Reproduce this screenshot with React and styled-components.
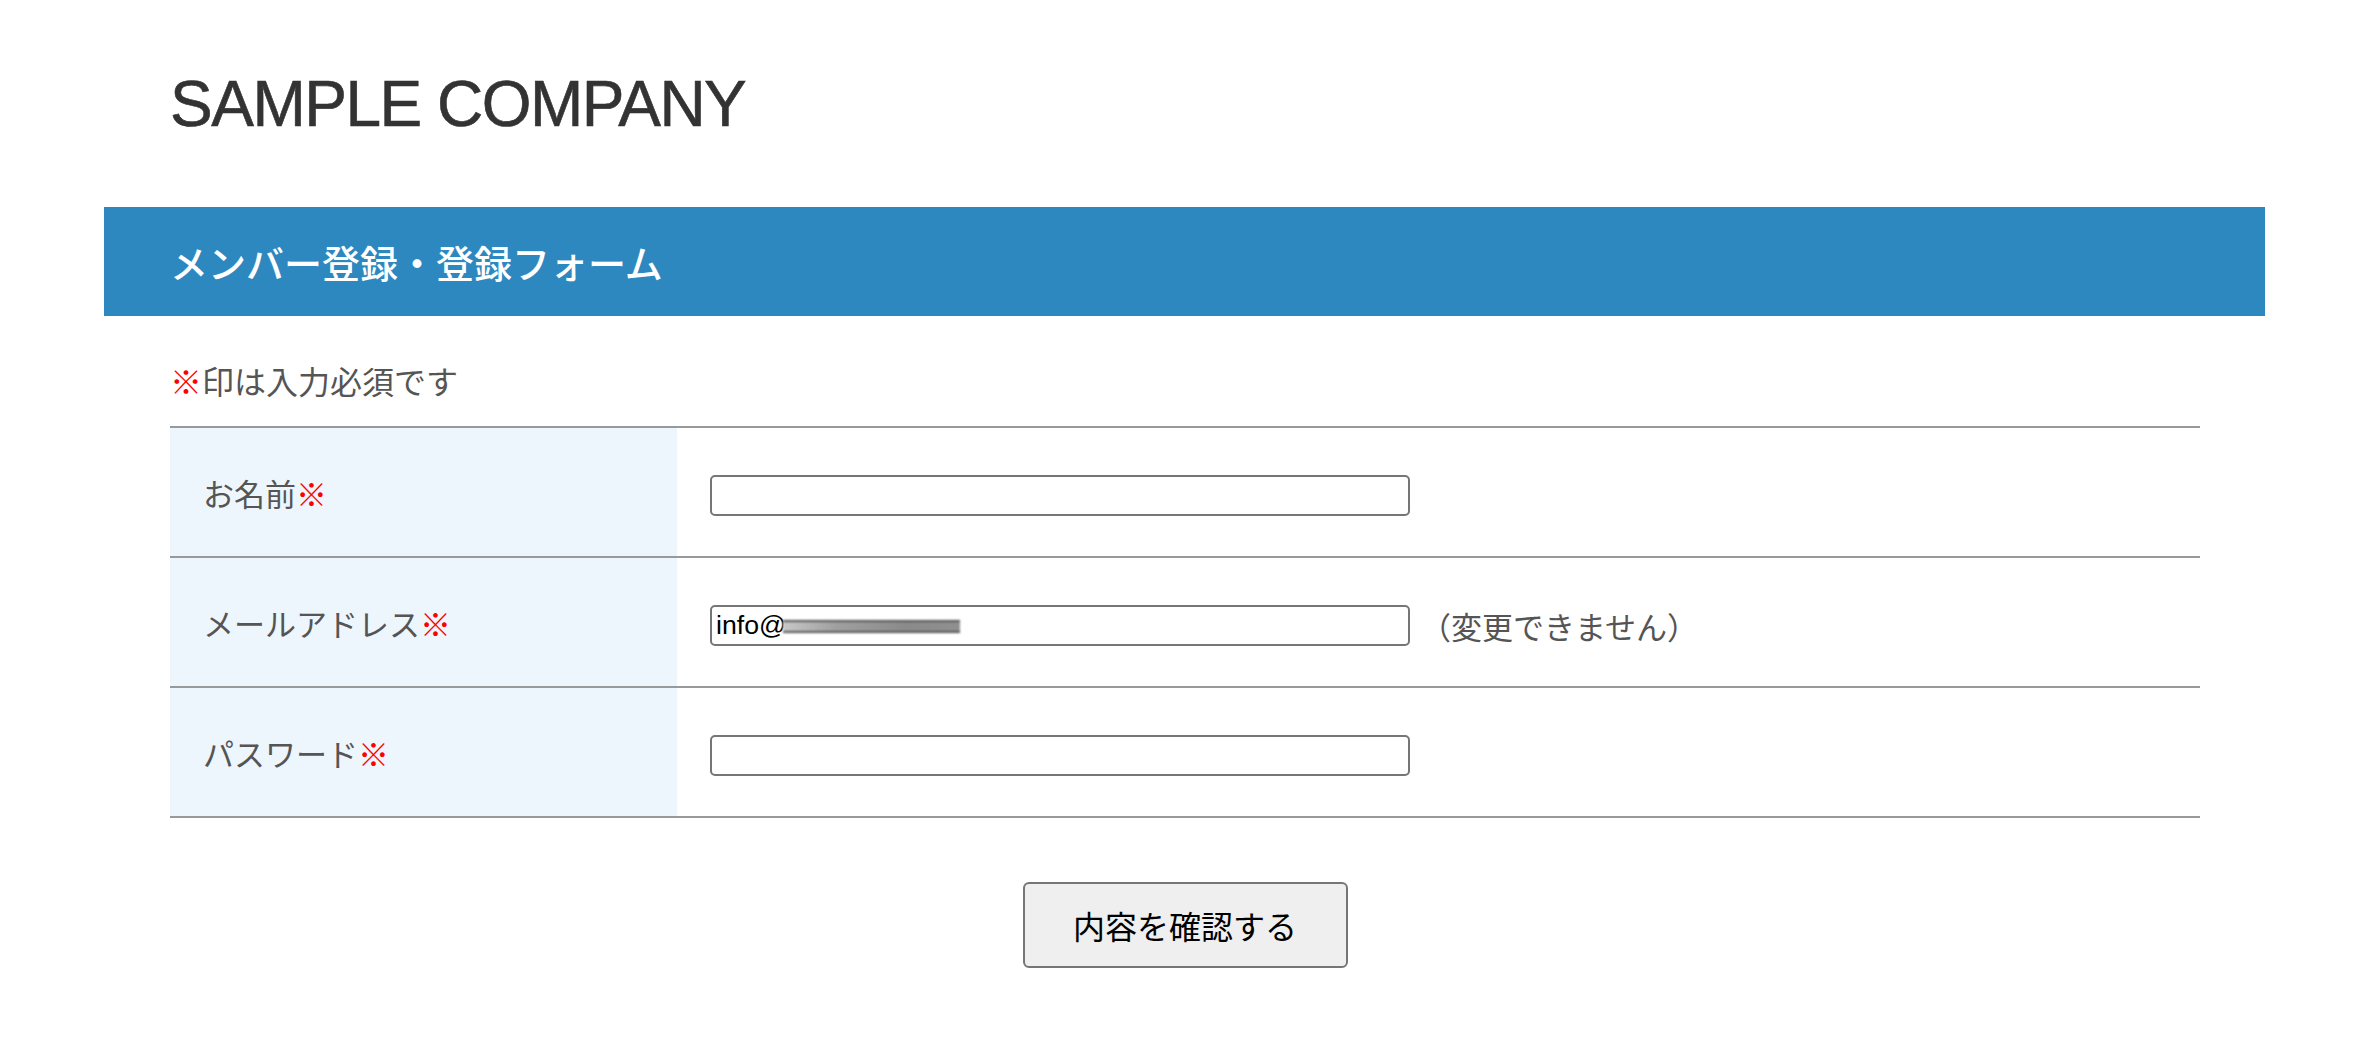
import styled, { createGlobalStyle } from "styled-components";

const GlobalStyle = createGlobalStyle`
  body {
    margin: 0;
    background: #fff;
    font-family: "Noto Sans CJK JP", "Liberation Sans", sans-serif;
  }
`;

const Page = styled.div`
  width: 2161px;
  padding-left: 104px;
  padding-bottom: 80px;
`;

const Title = styled.h1`
  margin: 0;
  padding: 72px 66px 0;
  font-family: "Liberation Sans", Arial, sans-serif;
  font-weight: 400;
  font-size: 64px;
  line-height: 64px;
  letter-spacing: -1.5px;
  color: #333;
  -webkit-text-stroke: 0.6px #333;
`;

const Heading = styled.h2`
  margin: 71px 0 0;
  height: 109px;
  padding-left: 66px;
  display: flex;
  align-items: center;
  background: #2e88c0;
  color: #fff;
  font-size: 38px;
  font-weight: 500;
`;

const Content = styled.div`
  padding: 0 65px 0 66px;
`;

const Notice = styled.p`
  margin: 40px 0 22px;
  font-size: 32px;
  line-height: 48px;
  color: #555;
`;

const Mark = styled.span`
  color: #ff0000;
`;

const Table = styled.div`
  border-top: 2px solid #999;
`;

const Row = styled.div`
  display: grid;
  grid-template-columns: 507px 1fr;
  height: 130px;
  box-sizing: border-box;
  border-bottom: 2px solid #999;
`;

const Label = styled.div`
  display: flex;
  align-items: center;
  padding-left: 33px;
  background: #eef6fd;
  font-size: 31px;
  color: #555;
`;

const Cell = styled.div`
  display: flex;
  align-items: center;
  padding: 6px 0 0 33px;
`;

const InputWrap = styled.div`
  position: relative;
  width: 700px;
  height: 41px;
`;

const Input = styled.input`
  width: 100%;
  height: 100%;
  box-sizing: border-box;
  margin: 0;
  padding: 0 4px;
  border: 2px solid #767676;
  border-radius: 5px;
  background: #fff;
  font-family: "Liberation Sans", Arial, sans-serif;
  font-size: 26.67px;
  color: #000;
  outline: none;
`;

const Blur = styled.span`
  position: absolute;
  left: 73px;
  top: 15px;
  width: 177px;
  height: 13px;
  background: linear-gradient(to right, #c8c8c8, #a0a0a0 30%, #8a8a8a 70%, #909090);
  border-top: 2px solid #555;
  border-bottom: 2px solid #555;
  box-sizing: border-box;
  filter: blur(1.2px);
`;

const Note = styled.span`
  margin-left: 10px;
  font-size: 31px;
  color: #555;
`;

const Actions = styled.div`
  display: flex;
  justify-content: center;
  margin-top: 64px;
`;

const Button = styled.button`
  width: 325px;
  height: 86px;
  border: 2px solid #767676;
  border-radius: 6px;
  background: #efefef;
  font-family: "Noto Sans CJK JP", sans-serif;
  font-size: 32px;
  color: #000;
  cursor: pointer;
`;

const fields = [
  { label: "お名前", value: "" },
  { label: "メールアドレス", value: "info@", locked: true },
  { label: "パスワード", value: "", type: "password" },
];

export default function App() {
  return (
    <>
      <GlobalStyle />
      <Page>
        <Title>SAMPLE COMPANY</Title>
        <Heading>メンバー登録・登録フォーム</Heading>
        <Content>
          <Notice>
            <Mark>※</Mark>印は入力必須です
          </Notice>
          <Table>
            {fields.map((f) => (
              <Row key={f.label}>
                <Label>
                  {f.label}
                  <Mark>※</Mark>
                </Label>
                <Cell>
                  <InputWrap>
                    <Input
                      type={f.type || "text"}
                      defaultValue={f.value}
                      readOnly={f.locked}
                    />
                    {f.locked && <Blur />}
                  </InputWrap>
                  {f.locked && <Note>（変更できません）</Note>}
                </Cell>
              </Row>
            ))}
          </Table>
          <Actions>
            <Button type="button">内容を確認する</Button>
          </Actions>
        </Content>
      </Page>
    </>
  );
}
